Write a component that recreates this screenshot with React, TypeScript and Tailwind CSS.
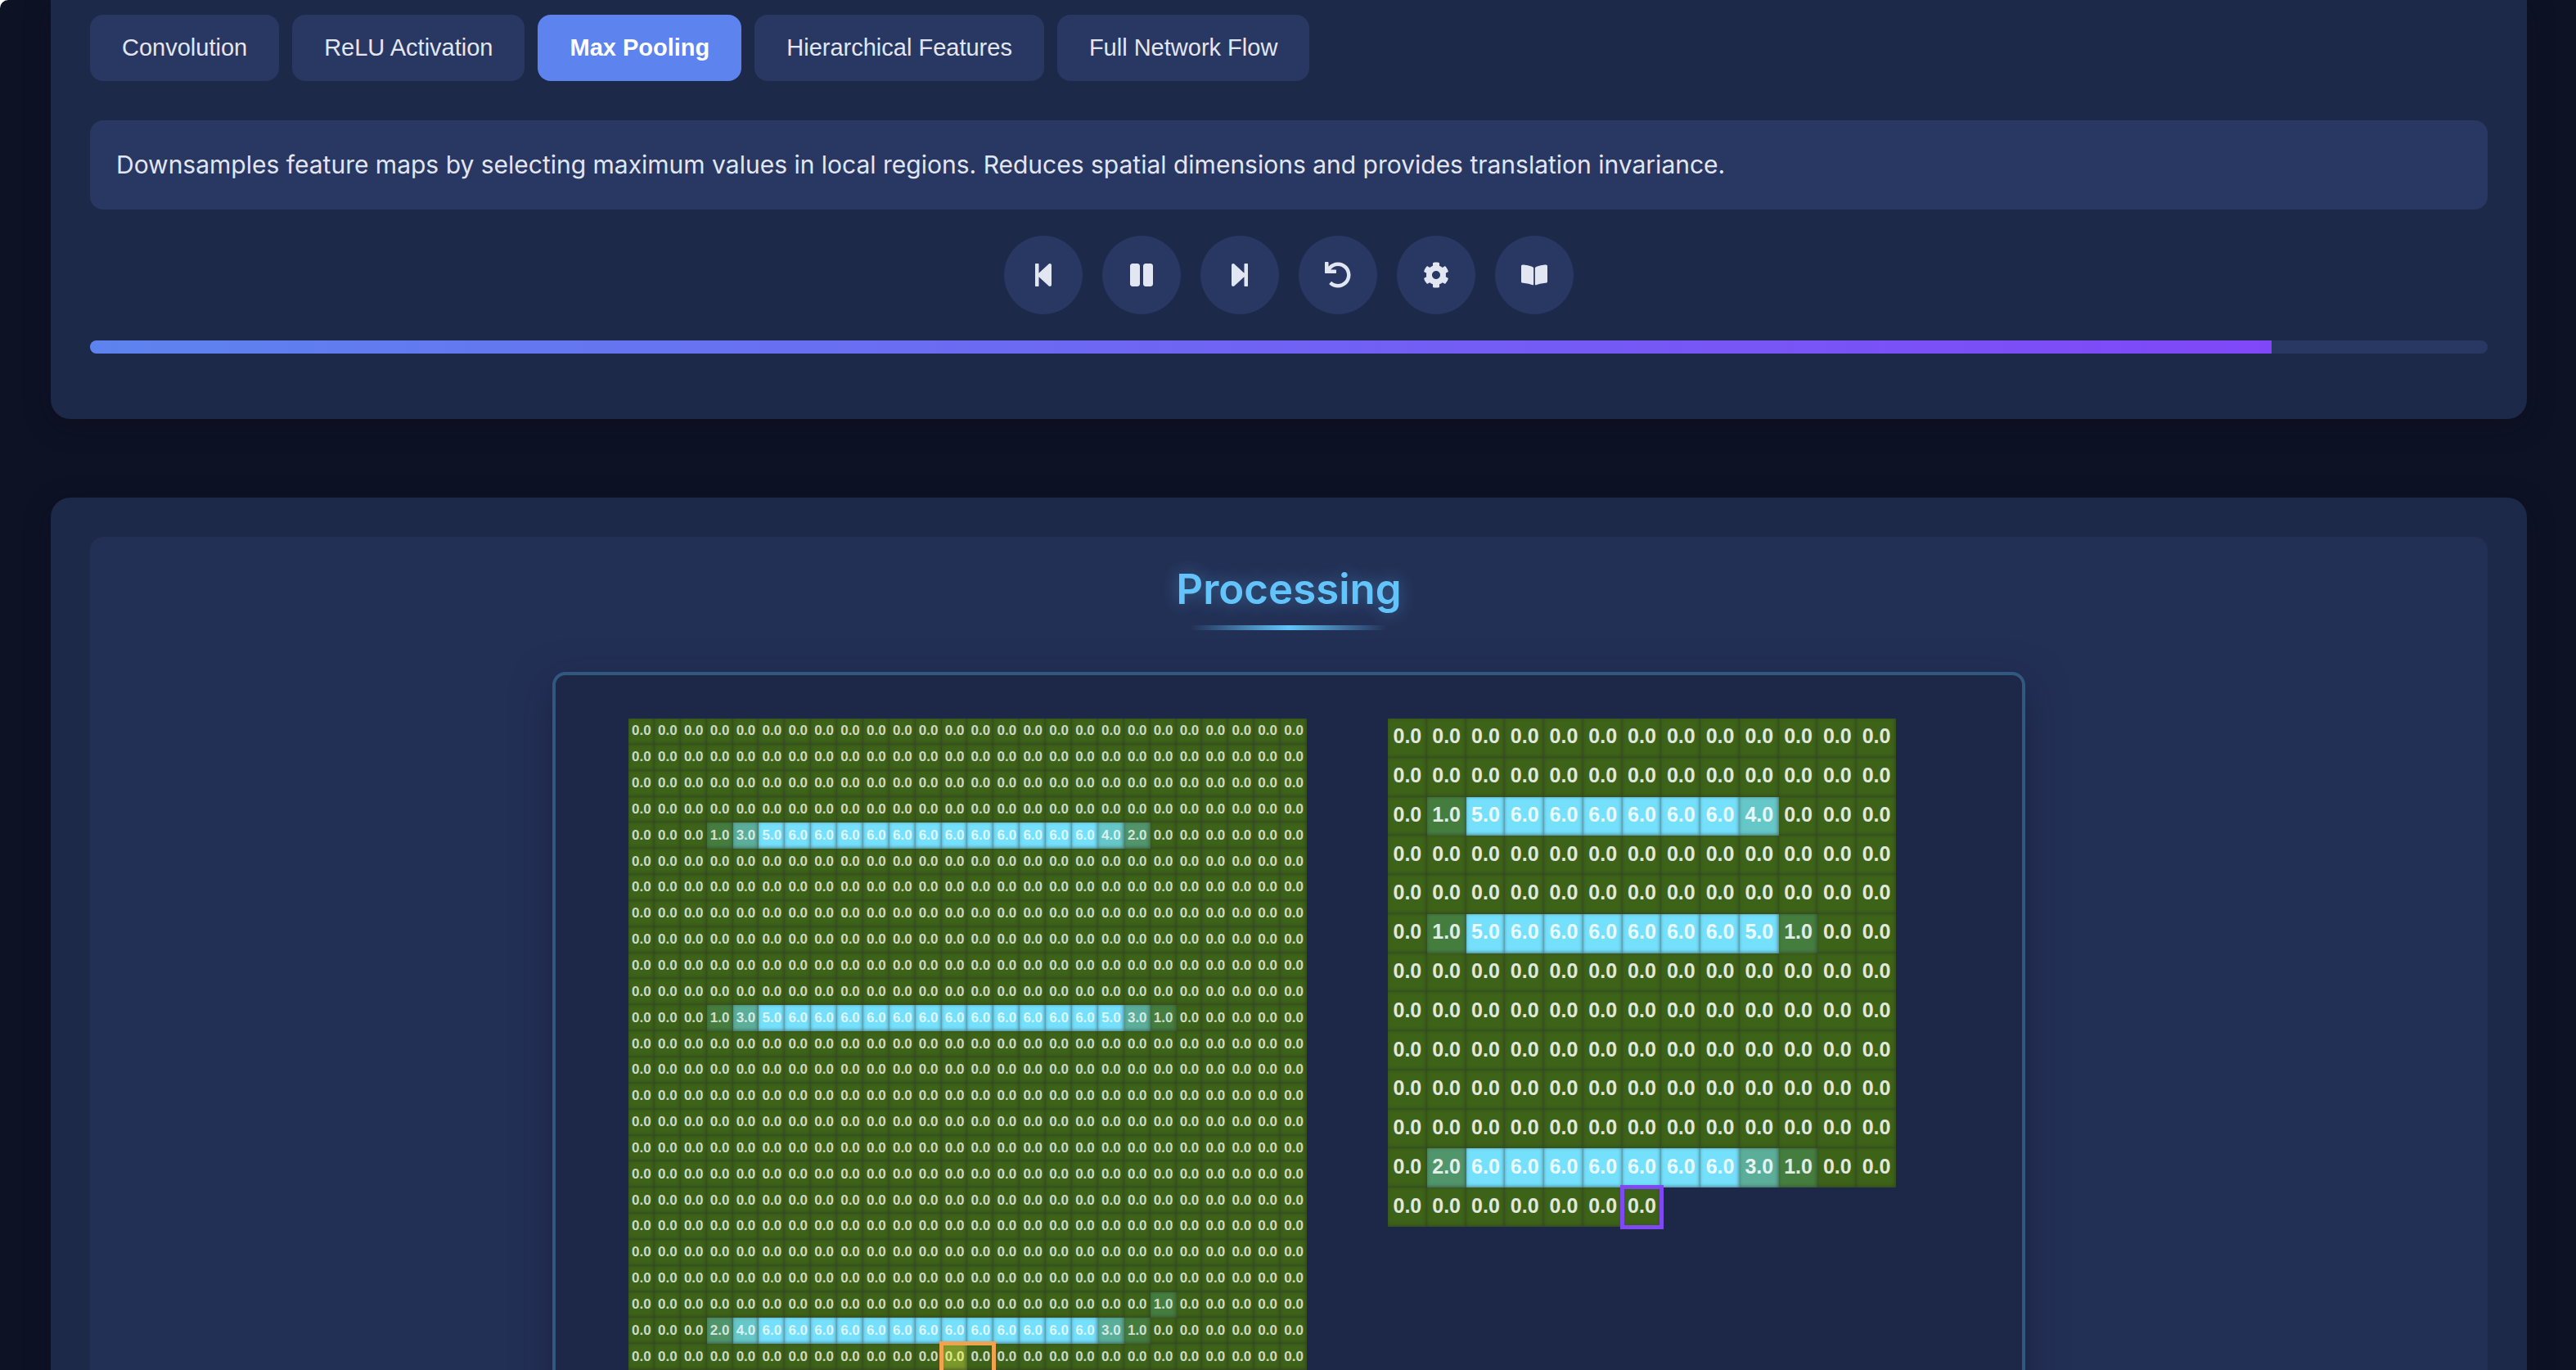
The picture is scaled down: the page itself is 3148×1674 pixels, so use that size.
import type { IconType } from 'react-icons';
import { FaBookOpen, FaCog, FaPause, FaStepBackward, FaStepForward, FaUndo } from 'react-icons/fa';

const tabs = ['Convolution', 'ReLU Activation', 'Max Pooling', 'Hierarchical Features', 'Full Network Flow'];

const controls: { label: string; Icon: IconType }[] = [
  { label: 'Previous step', Icon: FaStepBackward },
  { label: 'Pause', Icon: FaPause },
  { label: 'Next step', Icon: FaStepForward },
  { label: 'Reset', Icon: FaUndo },
  { label: 'Settings', Icon: FaCog },
  { label: 'Documentation', Icon: FaBookOpen },
];

const cellColors = [
  'bg-[#3d6318]',
  'bg-[#457d3f]',
  'bg-[#51956b]',
  'bg-[#5bae9a]',
  'bg-[#66c7c8]',
  'bg-[#75e0fc]',
  'bg-[#75e0fc]',
];

const zeros = (n: number): number[] => Array(n).fill(0);
const sixes = (n: number): number[] => Array(n).fill(6);

const input: number[][] = Array.from({ length: 26 }, () => zeros(26));
input[4] = [0, 0, 0, 1, 3, 5, ...sixes(12), 4, 2, ...zeros(6)];
input[11] = [0, 0, 0, 1, 3, 5, ...sixes(12), 5, 3, 1, ...zeros(5)];
input[22][20] = 1;
input[23] = [0, 0, 0, 2, 4, ...sixes(13), 3, 1, ...zeros(6)];

const TOTAL_POOLED = 12 * 13 + 7;
const pooled: number[] = Array.from({ length: TOTAL_POOLED }, (_, i) => {
  const r = Math.floor(i / 13) * 2;
  const c = (i % 13) * 2;
  return Math.max(input[r][c], input[r][c + 1], input[r + 1][c], input[r + 1][c + 1]);
});

const WINDOW_CELL = 24 * 26 + 12;

const cellShadow = 'shadow-[inset_-1px_-1px_4px_rgba(44,46,44,0.6)]';

export default function App() {
  return (
    <div className="h-screen overflow-hidden bg-white">
      <main className="min-h-full rounded-tl-[10px] bg-[#0d1225] pr-[60px] pl-[62px] font-['Inter',sans-serif] text-[#e2e6f3]">
        <section className="rounded-b-3xl bg-[#1d2949] px-12 pt-[18px] pb-20 shadow-[0_8px_32px_rgba(16,12,24,0.35)]">
          <div className="flex gap-4">
            {tabs.map((t) => (
              <button
                key={t}
                type="button"
                className={
                  t === 'Max Pooling'
                    ? "h-[81px] rounded-2xl bg-[#5d83ee] px-[39px] font-['Liberation_Sans',sans-serif] text-[29px] font-bold text-white"
                    : "h-[81px] rounded-2xl bg-[#293862] px-[39px] font-['Liberation_Sans',sans-serif] text-[29px]"
                }
              >
                {t}
              </button>
            ))}
          </div>
          <p className="mt-12 rounded-2xl bg-[#293862] p-8 text-[30px] leading-[45px]">
            Downsamples feature maps by selecting maximum values in local regions. Reduces spatial dimensions and
            provides translation invariance.
          </p>
          <div className="mt-8 flex justify-center gap-6">
            {controls.map(({ label, Icon }) => (
              <button
                key={label}
                type="button"
                aria-label={label}
                className="flex size-24 items-center justify-center rounded-full bg-[#293862] text-[#e2e6f3]"
              >
                <Icon className="h-8 w-auto" aria-hidden="true" />
              </button>
            ))}
          </div>
          <div className="mt-8 h-4 overflow-hidden rounded-lg bg-[#293862]">
            <div className="h-full w-[91%] bg-linear-to-r/srgb from-[#5d83ee] to-[#8047f8]" />
          </div>
        </section>

        <section className="mt-24 rounded-t-3xl bg-[#1d2949] p-12 shadow-[0_8px_32px_rgba(16,12,24,0.35)]">
          <div className="flex flex-col items-center rounded-2xl bg-[#233056] pt-8 pb-12">
            <h2 className="text-[51px] leading-[64px] font-semibold text-[#63c4fb] [text-shadow:0_0_20px_rgba(99,196,251,0.4)]">
              Processing
            </h2>
            <div className="mt-3 h-[6px] w-60 bg-linear-to-r/srgb from-transparent via-[#63c4fb] to-transparent" />
            <div className="mt-[51px] flex w-full max-w-[1800px] items-start gap-[99px] rounded-2xl border-4 border-[#31587f] bg-[#1d2848] pt-[53px] pb-14 pl-[89px] font-['Liberation_Sans',sans-serif] font-bold shadow-[0_16px_48px_rgba(20,20,45,0.5)]">
              <div className="relative grid h-[828px] w-[829px] shrink-0 grid-cols-26 grid-rows-26 text-[17px] leading-none text-white/75">
                {input.flat().map((v, i) => (
                  <div
                    key={i}
                    className={`flex items-center justify-center pb-[2px] ${cellShadow} ${
                      i === WINDOW_CELL ? 'bg-[#7b9829] text-[#dce98b]' : cellColors[v]
                    }`}
                  >
                    {v.toFixed(1)}
                  </div>
                ))}
                <div className="pointer-events-none absolute top-[92.308%] left-[46.154%] h-[7.692%] w-[7.692%] outline-5 -outline-offset-2 outline-[#f0a24e]" />
              </div>
              <div className="grid h-[621px] w-[621px] shrink-0 grid-cols-13 grid-rows-13 text-[25px] leading-none text-white/85">
                {pooled.map((v, i) => (
                  <div
                    key={i}
                    className={`flex items-center justify-center pb-1 ${cellShadow} ${cellColors[v]} ${
                      i === TOTAL_POOLED - 1 ? 'outline-5 -outline-offset-2 outline-[#7e48f2]' : ''
                    }`}
                  >
                    {v.toFixed(1)}
                  </div>
                ))}
              </div>
            </div>
          </div>
        </section>
      </main>
    </div>
  );
}
